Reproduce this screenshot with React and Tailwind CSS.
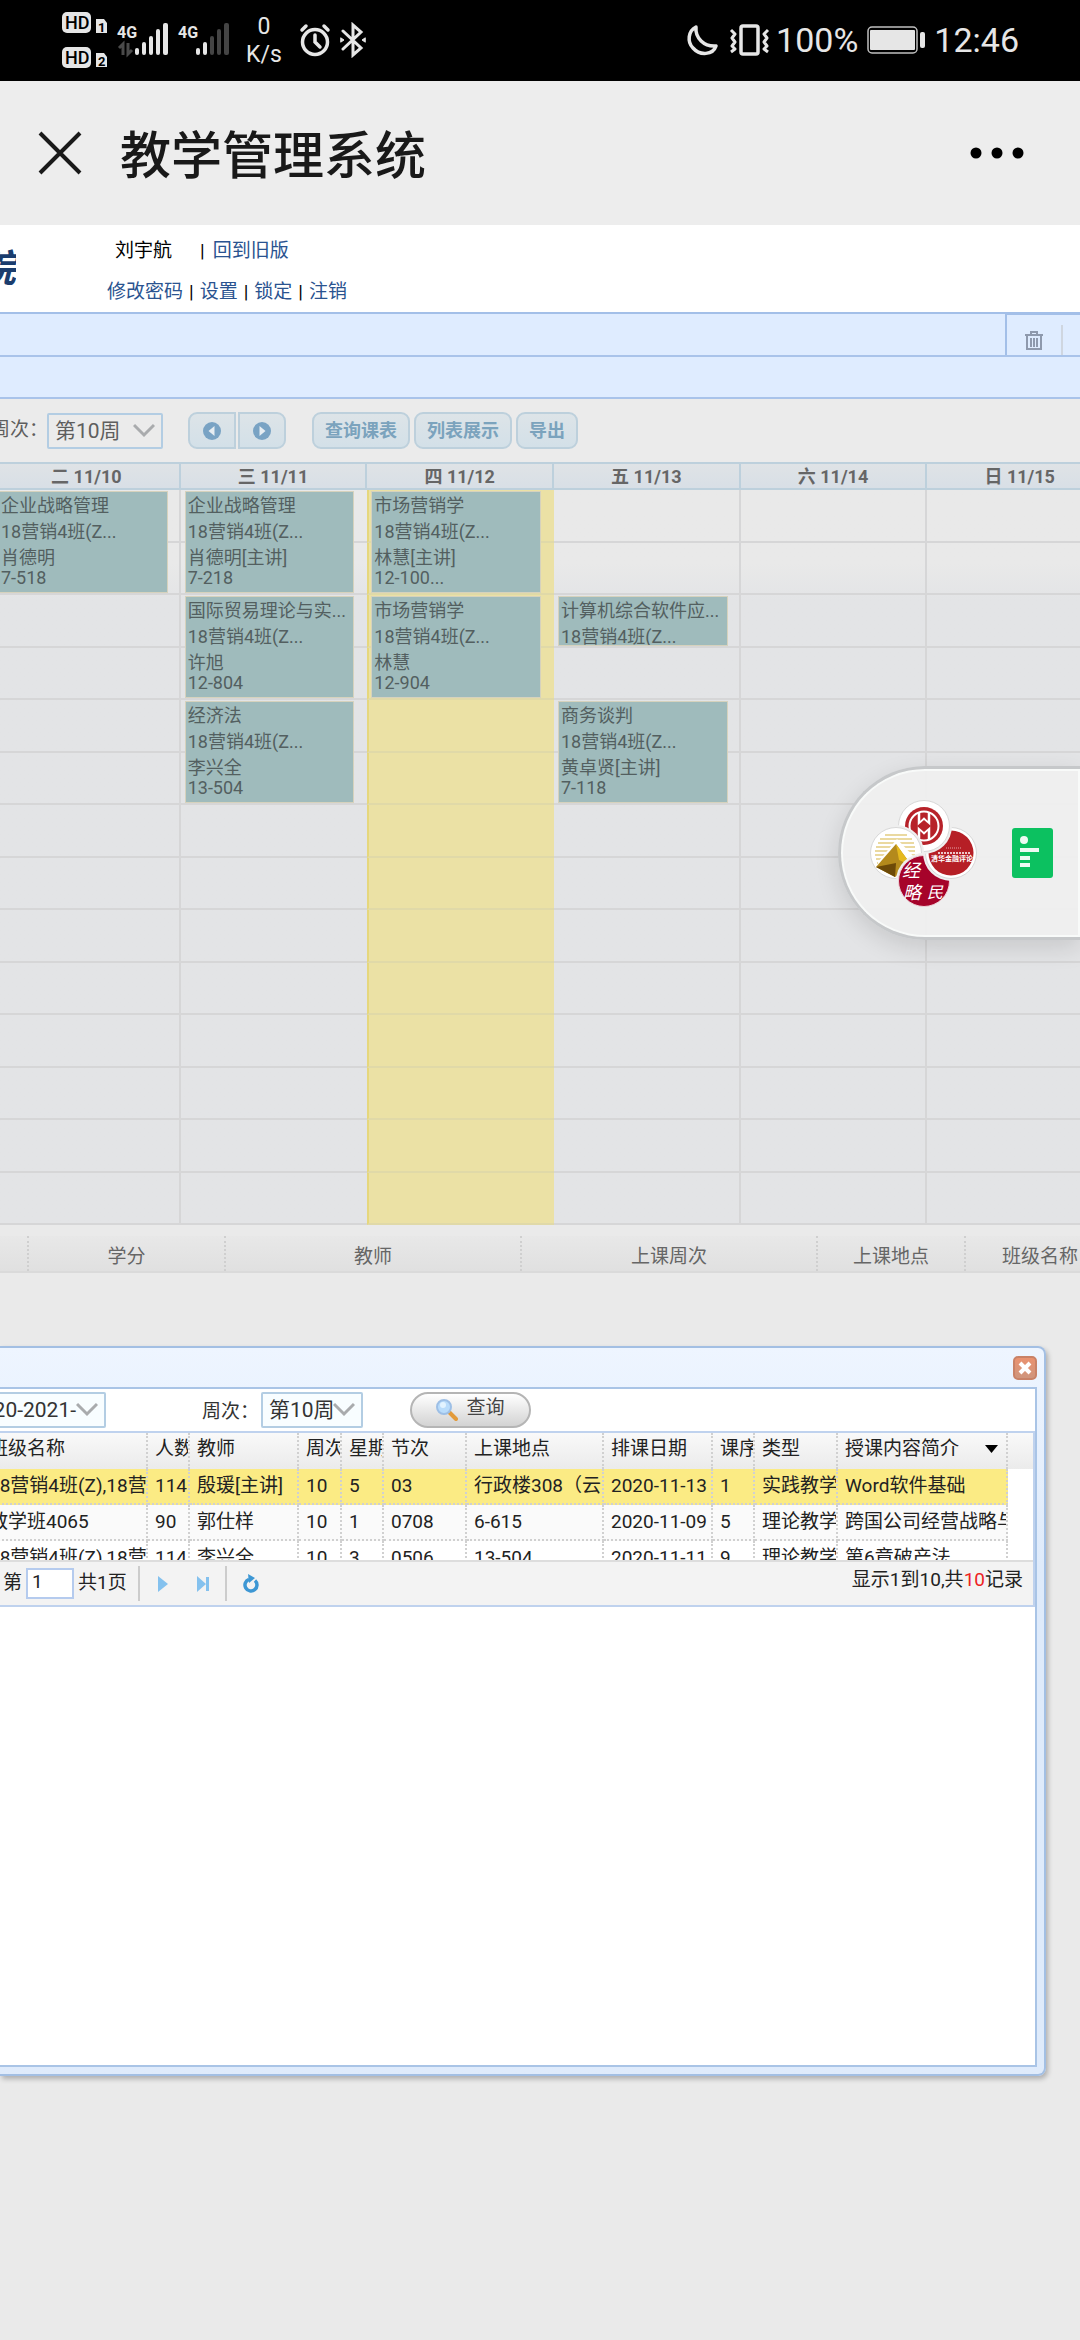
import React from "react";

const days = ["二 11/10", "三 11/11", "四 11/12", "五 11/13", "六 11/14", "日 11/15"];

const events = [
  { place: "col-start-1 row-start-1 row-span-2", lines: ["企业战略管理", "18营销4班(Z...", "肖德明", "7-518"] },
  { place: "col-start-2 row-start-1 row-span-2", lines: ["企业战略管理", "18营销4班(Z...", "肖德明[主讲]", "7-218"] },
  { place: "col-start-2 row-start-3 row-span-2", lines: ["国际贸易理论与实...", "18营销4班(Z...", "许旭", "12-804"] },
  { place: "col-start-2 row-start-5 row-span-2", lines: ["经济法", "18营销4班(Z...", "李兴全", "13-504"] },
  { place: "col-start-3 row-start-1 row-span-2", lines: ["市场营销学", "18营销4班(Z...", "林慧[主讲]", "12-100..."] },
  { place: "col-start-3 row-start-3 row-span-2", lines: ["市场营销学", "18营销4班(Z...", "林慧", "12-904"] },
  { place: "col-start-4 row-start-3 row-span-1", lines: ["计算机综合软件应...", "18营销4班(Z..."] },
  { place: "col-start-4 row-start-5 row-span-2", lines: ["商务谈判", "18营销4班(Z...", "黄卓贤[主讲]", "7-118"] },
];

const heads = ["班级名称", "人数", "教师", "周次", "星期", "节次", "上课地点", "排课日期", "课序", "类型", "授课内容简介"];

const rows = [
  ["18营销4班(Z),18营销", "114", "殷瑗[主讲]", "10", "5", "03", "行政楼308（云", "2020-11-13", "1", "实践教学", "Word软件基础"],
  ["教学班4065", "90", "郭仕样", "10", "1", "0708", "6-615", "2020-11-09", "5", "理论教学", "跨国公司经营战略与"],
  ["18营销4班(Z),18营销", "114", "李兴全", "10", "3", "0506", "13-504", "2020-11-11", "9", "理论教学", "第6章破产法"],
];

function StatusBar() {
  return (
    <header className="flex h-[81px] items-center justify-between bg-black pr-[61px] pb-0.5 pl-[62px] text-[#e6e6e6]">
      <div className="flex items-center">
        <svg width="168" height="60" viewBox="62 11 168 60" fill="#e6e6e6" aria-hidden="true">
          <rect x="62" y="13" width="29" height="21" rx="5" />
          <rect x="62" y="48" width="29" height="21" rx="5" />
          <path d="M96 20h8l3 4v10H96z M96 54h8l3 4v10H96z" />
          <g fontFamily="Roboto, sans-serif" fontWeight="500">
            <text x="65" y="30" fontSize="18" fill="#000">HD</text>
            <text x="65" y="65" fontSize="18" fill="#000">HD</text>
            <text x="98" y="33" fontSize="13" fontWeight="700" fill="#000">1</text>
            <text x="98" y="67" fontSize="13" fontWeight="700" fill="#000">2</text>
            <text x="117" y="39" fontSize="16" fontWeight="700">4G</text>
            <text x="178" y="39" fontSize="16" fontWeight="700">4G</text>
          </g>
          <path d="M119 49l4-4v11M132 51l-4 4v-11" fill="none" stroke="#4a4a4a" strokeWidth="3" />
          <rect x="135" y="49" width="4" height="7" rx="2" />
          <rect x="142" y="43" width="4" height="13" rx="2" />
          <rect x="149" y="37" width="4" height="19" rx="2" />
          <rect x="156" y="30" width="4" height="26" rx="2" />
          <rect x="163" y="24" width="5" height="32" rx="2" />
          <rect x="196" y="49" width="4" height="7" rx="2" />
          <rect x="203" y="43" width="4" height="13" rx="2" />
          <g fill="#444">
            <rect x="210" y="37" width="4" height="19" rx="2" />
            <rect x="217" y="30" width="4" height="26" rx="2" />
            <rect x="224" y="24" width="5" height="32" rx="2" />
          </g>
        </svg>
        <div className="ml-4 flex w-9 flex-col items-center pt-0.5 text-[23px] leading-[28px]">
          <span>0</span>
          <span>K/s</span>
        </div>
        <svg className="ml-4" width="68" height="36" viewBox="298 22 68 36" fill="none" stroke="#e6e6e6" strokeWidth="3.5" strokeLinecap="round" aria-hidden="true">
          <circle cx="315" cy="42" r="12.5" />
          <path d="M315 35v7l5 5M302 30l4-4M328 30l-4-4" />
          <path d="M343 31l18 17-8 7V25l8 7-18 17" strokeWidth="3" />
          <path d="M341 38l3 2-3 2zM365 38l-3 2 3 2z" fill="#e6e6e6" strokeWidth="1" />
        </svg>
      </div>
      <div className="flex items-center text-[34px] leading-[40px]">
        <svg width="84" height="36" viewBox="687 22 84 36" fill="none" stroke="#e6e6e6" strokeWidth="3.5" strokeLinejoin="round" aria-hidden="true">
          <path d="M697 27c-8 4-9 15-3 21 7 8 20 7 23-2-12 1-21-8-20-19z" />
          <rect x="742" y="26" width="17" height="28" rx="2" />
          <path d="M732 30l4 4-3 4 3 4-3 4 3 3-4 3M769 30l-4 4 3 4-3 4 3 4-3 3 4 3" strokeWidth="3" />
        </svg>
        <span className="ml-1.5">100%</span>
        <svg className="ml-2" width="60" height="30" viewBox="866 26 60 30" fill="#e6e6e6" aria-hidden="true">
          <rect x="868" y="28" width="49" height="26" rx="4" fill="none" stroke="#c0c0c0" strokeWidth="1.5" />
          <rect x="870" y="31" width="45" height="20" rx="1" />
          <rect x="920" y="33" width="5" height="16" rx="2" />
        </svg>
        <span className="ml-2">12:46</span>
      </div>
    </header>
  );
}

function NavBar() {
  return (
    <nav className="flex h-36 items-center bg-[#ededed] pr-[56px] pl-[36px]">
      <button type="button" aria-label="关闭">
        <svg width="48" height="48" viewBox="0 0 48 48" stroke="#191919" strokeWidth="4" aria-hidden="true">
          <path d="M4 4l40 40M44 4L4 44" />
        </svg>
      </button>
      <h1 className="ml-9 pt-2 text-[51px] leading-[72px] font-medium text-[#191919]">教学管理系统</h1>
      <button type="button" aria-label="更多" className="ml-auto">
        <svg width="54" height="14" viewBox="0 0 54 14" aria-hidden="true">
          <circle cx="6" cy="7" r="5.5" />
          <circle cx="27" cy="7" r="5.5" />
          <circle cx="48" cy="7" r="5.5" />
        </svg>
      </button>
    </nav>
  );
}

function UserBar() {
  return (
    <div className="flex h-[87px] bg-white text-[19px] leading-[28px]">
      <div className="flex w-4 items-center justify-end overflow-hidden">
        <span className="text-[38px] leading-[40px] font-bold text-[#1b3d6e] italic">院</span>
      </div>
      <div className="flex flex-col justify-between pt-3 pb-1.5 pl-[91px]">
        <div className="flex items-center gap-2 pl-2 text-black">
          <span className="mr-5">刘宇航</span>
          <span>|</span>
          <a href="#old" className="text-[#2a5390]">回到旧版</a>
        </div>
        <div className="flex items-center gap-1.5 text-[#2a5390]">
          <a href="#password">修改密码</a>
          <span className="text-black">|</span>
          <a href="#settings">设置</a>
          <span className="text-black">|</span>
          <a href="#lock">锁定</a>
          <span className="text-black">|</span>
          <a href="#logout">注销</a>
        </div>
      </div>
    </div>
  );
}

function Picker({ id, value, size }) {
  return (
    <span className={size + " relative flex h-9 shrink-0 text-[21px]"}>
      <select id={id} defaultValue={value} className="w-full appearance-none rounded-xs border-2 border-[#b3cde3] bg-transparent pl-[6px] leading-[30px]">
        <option>{value}</option>
      </select>
      <svg className="pointer-events-none absolute top-2.5 right-2" width="22" height="15" viewBox="0 0 22 15" fill="none" stroke="#a9abad" strokeWidth="3" aria-hidden="true">
        <path d="M1 2l10 10L21 2" />
      </svg>
    </span>
  );
}

function ArrowButton({ label, shape, path }) {
  return (
    <button type="button" aria-label={label} className={shape + " flex h-[37px] w-12 items-center justify-center border-2 border-[#bdd0dc] bg-linear-to-b from-[#dde4e8] to-[#d3e0e8]"}>
      <svg width="20" height="20" viewBox="0 0 20 20" aria-hidden="true">
        <circle cx="10" cy="10" r="9" fill="#79a3c4" />
        <path d={path} fill="#e6edf2" />
      </svg>
    </button>
  );
}

function Toolbar() {
  const tool = "h-[37px] rounded-[9px] border-2 border-[#bdd0dc] bg-linear-to-b from-[#dde4e8] to-[#d3e0e8] px-[11px] text-[18px] leading-[32px] font-bold text-[#7ba3bd]";
  return (
    <div className="flex h-[63px] items-center bg-[#ebebeb] text-[#5e5e5e]">
      <label htmlFor="week" className="-ml-[9px] w-14 shrink-0 text-[19px] whitespace-nowrap">周次：</label>
      <Picker id="week" value="第10周" size="w-[116px]" />
      <div className="ml-[25px] flex gap-0.5">
        <ArrowButton label="上一周" shape="rounded-l-[9px]" path="M12.500 5v10L6.500 10z" />
        <ArrowButton label="下一周" shape="rounded-r-[9px]" path="M7.500 5v10l6-5z" />
      </div>
      <div className="ml-[26px] flex gap-1">
        <button type="button" className={tool}>查询课表</button>
        <button type="button" className={tool}>列表展示</button>
        <button type="button" className={tool}>导出</button>
      </div>
    </div>
  );
}

function Calendar() {
  return (
    <section className="overflow-hidden text-[18px] text-[#535f60]">
      <div className="-mr-[34px] -ml-[6px]">
        <div className="grid h-7 grid-cols-6 border-y-2 border-[#bdd0dc] bg-linear-to-b from-[#dfe3e6] to-[#d8dfe6] text-center text-[18px] leading-[26px] font-bold text-[#666]">
          {days.map((d) => (
            <div key={d} className="border-r-2 border-[#bdd0dc]">{d}</div>
          ))}
        </div>
        <div className="grid">
          <div className="col-start-1 row-start-1 grid h-[735px] grid-cols-6 grid-rows-14 bg-linear-to-b from-[#e9e9e9] from-10% to-[#e3e4e6] to-15%">
            {Array.from({ length: 84 }, (_, i) => (
              <div
                key={i}
                className={i % 6 === 2 ? "border-b-2 border-l-2 border-b-[#e0d9a8] border-l-[#e6d77c] bg-[#ebe1a5]" : i % 6 === 1 ? "border-b-2 border-[#d6d6d7]" : "border-r-2 border-b-2 border-[#d6d6d7]"}
              />
            ))}
          </div>
          <div className="col-start-1 row-start-1 grid h-[735px] grid-cols-6 grid-rows-14">
            {events.map((e) => (
              <article key={e.place} className={e.place + " mt-px mr-[13px] mb-0.5 ml-1 overflow-hidden border border-[#d6d2bd] bg-[#9fbbbc] pt-px pl-0.5 whitespace-nowrap"}>
                {e.lines.map((t, i) => (
                  <p key={i} className={i === 3 ? "leading-[14px]" : "leading-[26px]"}>{t}</p>
                ))}
              </article>
            ))}
          </div>
        </div>
      </div>
    </section>
  );
}

function CourseHeader() {
  const cell = "shrink-0 border-r-2 border-dotted border-[#cfcfcf] pt-0.5";
  return (
    <div className="mt-[11px] flex h-[37px] overflow-hidden border-b-2 border-[#dadada] bg-linear-to-b from-[#e8e8e8] to-[#e0e0e0] text-center text-[19px] leading-[38px] whitespace-nowrap text-[#666]">
      <div className={cell + " w-[29px]"} />
      <div className={cell + " w-[197px]"}>学分</div>
      <div className={cell + " w-[296px]"}>教师</div>
      <div className={cell + " w-[296px]"}>上课周次</div>
      <div className={cell + " w-[148px]"}>上课地点</div>
      <div className="w-[148px] shrink-0 pt-0.5">班级名称</div>
    </div>
  );
}

function LessonTable() {
  const line = "overflow-hidden border-r-2 border-b-2 border-dotted border-[#d0d0d0] pl-[7px] font-normal";
  return (
    <div className="h-[127px] overflow-hidden">
      <table className="-ml-[18px] w-[calc(100%+18px)] table-fixed border-separate border-spacing-0 text-left text-[19px] whitespace-nowrap text-[#222]">
        <colgroup>
          <col className="w-[166px]" />
          <col className="w-[42px]" />
          <col className="w-[109px]" />
          <col className="w-[43px]" />
          <col className="w-[42px]" />
          <col className="w-[83px]" />
          <col className="w-[137px]" />
          <col className="w-[109px]" />
          <col className="w-[42px]" />
          <col className="w-[83px]" />
          <col className="w-[170px]" />
          <col />
        </colgroup>
        <thead>
          <tr className="h-9 bg-linear-to-b from-[#f9f9f9] to-[#ebebeb] leading-[30px]">
            {heads.map((h, i) => (
              <th key={h} scope="col" className="overflow-hidden border-r-2 border-dotted border-[#d0d0d0] pb-1 pl-[7px] font-normal">
                {i === 10 ? (
                  <span className="flex items-center justify-between pr-2">
                    {h}
                    <svg width="13" height="8" viewBox="0 0 13 8" aria-hidden="true"><path d="M0 0h13L6.500 8z" /></svg>
                  </span>
                ) : h}
              </th>
            ))}
            <td />
          </tr>
        </thead>
        <tbody>
          {rows.map((r, n) => (
            <tr key={n} className="h-9 leading-[32px]">
              {r.map((c, i) => (
                <td key={i} className={line + (n === 0 ? " bg-[#fbeb84]" : n === 1 ? " bg-[#fafafa]" : " bg-white")}>{c}</td>
              ))}
              <td />
            </tr>
          ))}
        </tbody>
      </table>
    </div>
  );
}

function Pager() {
  return (
    <div className="flex h-[45px] items-center border-t-2 border-[#ddd] bg-[#f3f3f3] pr-2.5 pl-[3px] text-[19px] text-[#222]">
      <label htmlFor="page">第</label>
      <input id="page" defaultValue="1" className="ml-1 h-[31px] w-12 border-2 border-[#b5cbee] bg-white pb-1 pl-1 leading-[24px]" />
      <span className="ml-1">共1页</span>
      <span className="ml-[11px] h-[35px] w-0.5 bg-[#ccc]" />
      <button type="button" aria-label="下一页" className="ml-[18px]">
        <svg width="10" height="16" viewBox="0 0 10 16" aria-hidden="true"><path d="M0 0l10 8-10 8z" fill="#84c1ee" /></svg>
      </button>
      <button type="button" aria-label="末页" className="ml-[29px]">
        <svg width="13" height="16" viewBox="0 0 13 16" fill="#84c1ee" aria-hidden="true"><path d="M0 0l9 8-9 8zM9 1h3v14H9z" /></svg>
      </button>
      <span className="ml-[15px] h-[35px] w-0.5 bg-[#ccc]" />
      <button type="button" aria-label="刷新" className="ml-[15px]">
        <svg width="18" height="20" viewBox="0 0 18 20" fill="none" aria-hidden="true">
          <path d="M13 6.500a6 6 0 1 1-6-1.200" stroke="#3d97d4" strokeWidth="3.500" />
          <path d="M6 0l7 4-6 5z" fill="#3d97d4" />
        </svg>
      </button>
      <span className="ml-auto pb-1.5">显示1到10,共<span className="text-[#ee2222]">10</span>记录</span>
    </div>
  );
}

function Dialog() {
  return (
    <section role="dialog" aria-label="授课安排" className="mt-[73px] mr-[34px] flex h-[730px] flex-col rounded-r-[8px] border-y-2 border-r-2 border-[#a3bfe3] bg-linear-to-b from-[#eef5ff] to-[#dfebfb] to-30% pr-[7px] pb-[7px] shadow-[2px_3px_5px_rgba(0,0,0,0.25)]">
      <div className="flex h-[39px] shrink-0 items-center justify-end">
        <button type="button" aria-label="关闭窗口" className="flex h-6 w-6 items-center justify-center rounded-[5px] border-2 border-[#c98267] bg-linear-to-b from-[#ea9270] to-[#cf957c]">
          <svg width="14" height="14" viewBox="0 0 14 14" stroke="#fff" strokeWidth="4" aria-hidden="true"><path d="M2 2l10 10M12 2L2 12" /></svg>
        </button>
      </div>
      <div className="min-h-0 flex-1 border-y-2 border-r-2 border-[#a9c4e6] bg-white">
        <div className="flex h-[42px] items-center text-[19px] text-[#333]">
          <label htmlFor="term" className="sr-only">学期</label>
          <div className="-ml-[38px] bg-[#f8fdff]">
            <Picker id="term" value="2020-2021-" size="w-[144px]" />
          </div>
          <label htmlFor="lesson-week" className="ml-[96px] w-[59px] pt-1">周次：</label>
          <div className="bg-[#f8fdff]">
            <Picker id="lesson-week" value="第10周" size="w-[102px]" />
          </div>
          <button type="button" className="ml-[47px] flex h-9 w-[121px] items-center justify-center gap-2 rounded-full border-2 border-[#b5b5b5] bg-linear-to-b from-white to-[#d3d3d3] text-[#444]">
            <svg width="22" height="22" viewBox="0 0 22 22" aria-hidden="true">
              <path d="M13 13l7 7" stroke="#e29a3a" strokeWidth="4" strokeLinecap="round" />
              <circle cx="8" cy="8" r="7" fill="#b9dcfb" stroke="#9dbfe6" strokeWidth="2" />
              <circle cx="7" cy="6" r="3" fill="#e2f3ff" />
            </svg>
            <span className="pb-1">查询</span>
          </button>
        </div>
        <div className="border-y-2 border-r-2 border-[#bfd2ee]">
          <LessonTable />
          <Pager />
        </div>
      </div>
    </section>
  );
}

function PyramidBadge() {
  return (
    <g>
      <circle cx="896" cy="852" r="28" fill="#efefef" />
      <circle cx="896" cy="852" r="25.5" fill="#fff" stroke="#d8d8d8" />
      <path d="M885 834h22M880 838h32M878 842h36M876 846h39M875 850h40M875 854h40M876 858h39M877 862h16" stroke="#ead9a0" strokeWidth="2" />
      <path d="M878 861l19-23 19 20-3 12-34 0z" fill="#fff" />
      <path d="M876 866l20-23 16 22-17 11z" fill="#b48a1c" />
      <path d="M876 866l19 10 1-14z" fill="#6d4a08" />
      <path d="M896 843l16 22-13-6z" fill="#e5b91e" />
    </g>
  );
}

function FloatingWindow() {
  return (
    <aside className="absolute top-[766px] right-0 flex h-[174px] w-[242px] items-center rounded-l-full border-y-3 border-l-3 border-[#c6c8ca] bg-[#efefef]/95 pl-[28px] shadow-[0_8px_24px_rgba(0,0,0,0.12)] inset-ring-2 inset-ring-[#f8faf9]">
      <svg width="110" height="110" viewBox="869 797 110 110" aria-hidden="true">
        <clipPath id="upper-half">
          <rect x="866" y="820" width="60" height="32" />
        </clipPath>
        <PyramidBadge />
        <circle cx="924" cy="880" r="28" fill="#efefef" />
        <circle cx="924" cy="880" r="25.5" fill="#a6032a" stroke="#eed3d9" />
        <g fill="#fff" fontSize="18" fontStyle="italic">
          <text x="902" y="876">经</text>
          <text x="903" y="898">略</text>
          <text x="927" y="897" fontSize="16">民</text>
        </g>
        <circle cx="951" cy="852" r="28" fill="#efefef" />
        <circle cx="951" cy="852" r="25.5" fill="#fff" stroke="#d8d8d8" />
        <circle cx="951" cy="852" r="22.5" fill="#b61f26" />
        <text x="931" y="860" fontSize="7" fontWeight="700" fill="#fff">清华金融评论</text>
        <path d="M938 852h33" stroke="#fff" strokeWidth="1.5" strokeDasharray="2 1" />
        <path d="M946 847h15" stroke="#e3a3a5" strokeWidth="1" strokeDasharray="1 1" />
        <circle cx="924" cy="825" r="28" fill="#efefef" />
        <circle cx="924" cy="825" r="25.5" fill="#fff" stroke="#d8d8d8" />
        <circle cx="924" cy="825" r="19" fill="#b72229" />
        <circle cx="924" cy="825" r="14.5" fill="none" stroke="#fff" strokeWidth="2" />
        <path d="M919 811v12l5-5 5 5v-12M919 839v-12l5 5 5-5v12" fill="none" stroke="#fff" strokeWidth="2.500" />
        <path d="M919 811v28M929 811v28" stroke="#fff" strokeWidth="1.500" />
        <path d="M917 825l7-6 7 6-7 6z" fill="#b72229" />
        <g clipPath="url(#upper-half)">
          <PyramidBadge />
        </g>
      </svg>
      <svg className="ml-[33px]" width="41" height="50" viewBox="0 0 41 50" aria-hidden="true">
        <rect width="41" height="50" rx="3" fill="#0cc160" />
        <g fill="#eefaf3">
          <circle cx="12" cy="12" r="4" />
          <path d="M8 20h19v4H8zM8 28h10v4H8zM8 35h10v4H8z" />
        </g>
      </svg>
    </aside>
  );
}

export default function App() {
  return (
    <div className="relative flex min-h-screen flex-col overflow-hidden bg-[#eaeaea] font-[Roboto,'Noto_Sans_CJK_SC',sans-serif]">
      <StatusBar />
      <NavBar />
      <UserBar />
      <div className="flex h-[43px] justify-end border-t-2 border-[#a3bfe8] bg-[#dfecff]">
        <div className="flex w-[75px] border-t border-l-2 border-[#a3bfe8]">
          <button type="button" aria-label="清空" className="flex flex-1 items-center justify-center pt-3">
            <svg width="18" height="20" viewBox="0 0 18 20" fill="none" stroke="#8e99ad" strokeWidth="2" aria-hidden="true">
              <path d="M0 4h18M6 4V1h6v3M2 5v13h14V5M6 7v9M9 7v9M12 7v9" />
            </svg>
          </button>
          <div className="mt-2.5 w-[19px] border-l-2 border-[#cfd6e0]" />
        </div>
      </div>
      <div className="h-11 border-y-2 border-[#a9c3ea] bg-[#dfecff]" />
      <Toolbar />
      <Calendar />
      <CourseHeader />
      <Dialog />
      <FloatingWindow />
    </div>
  );
}
